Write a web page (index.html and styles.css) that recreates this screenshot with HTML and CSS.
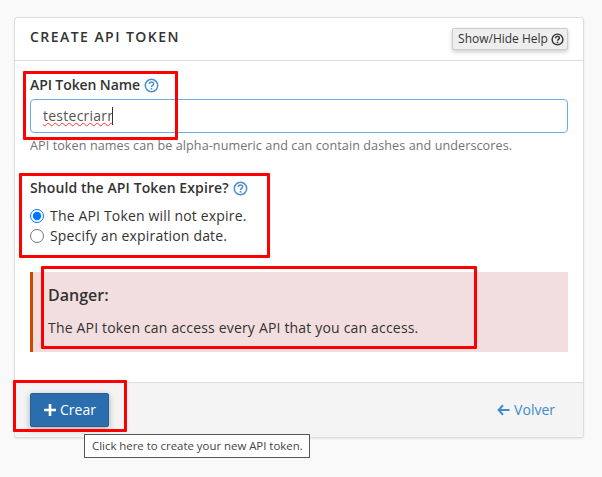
FILE: index.html
```html
<!DOCTYPE html>
<html lang="en">
<head>
<meta charset="utf-8">
<title>Create API Token</title>
<link rel="stylesheet" href="styles.css">
</head>
<body>
<div class="panel">
  <div class="panel-head">
    <h1 class="title">CREATE API TOKEN</h1>
    <button class="help-btn" type="button">Show/Hide Help
      <svg class="help-icon" width="13" height="13" viewBox="0 0 13 13"><circle cx="6.5" cy="6.5" r="5.4" fill="none" stroke="#333" stroke-width="1.4"/><path d="M4.6 5.2c0-2.4 3.8-2.4 3.8-.2 0 1.3-1.9 1.4-1.9 2.8" fill="none" stroke="#333" stroke-width="1.5"/><rect x="5.7" y="8.7" width="1.6" height="1.6" fill="#333"/></svg>
    </button>
  </div>
  <div class="panel-body">
    <div class="field">
      <div class="label">API Token Name
        <svg class="q-icon" width="15" height="15" viewBox="0 0 15 15"><circle cx="7.5" cy="7.5" r="6.2" fill="none" stroke="#4a90cf" stroke-width="1.5"/><path d="M5.4 6c0-2.7 4.3-2.7 4.3-.2 0 1.5-2.2 1.5-2.2 3.2" fill="none" stroke="#4a90cf" stroke-width="1.5"/><rect x="6.7" y="10" width="1.6" height="1.6" fill="#4a90cf"/></svg>
      </div>
      <div class="input"><span class="misspelled">testecriarr</span><span class="caret"></span></div>
      <div class="hint">API token names can be alpha-numeric and can contain dashes and underscores.</div>
    </div>
    <div class="field-expire">
      <div class="label label-wide">Should the API Token Expire?
        <svg class="q-icon" width="15" height="15" viewBox="0 0 15 15"><circle cx="7.5" cy="7.5" r="6.2" fill="none" stroke="#4a90cf" stroke-width="1.5"/><path d="M5.4 6c0-2.7 4.3-2.7 4.3-.2 0 1.5-2.2 1.5-2.2 3.2" fill="none" stroke="#4a90cf" stroke-width="1.5"/><rect x="6.7" y="10" width="1.6" height="1.6" fill="#4a90cf"/></svg>
      </div>
      <label class="radio"><input type="radio" name="exp" checked> The API Token will not expire.</label>
      <label class="radio"><input type="radio" name="exp"> Specify an expiration date.</label>
    </div>
    <div class="danger">
      <div class="danger-title">Danger:</div>
      <div class="danger-text">The API token can access every API that you can access.</div>
    </div>
  </div>
  <div class="panel-foot">
    <button class="create" type="button"><svg width="12" height="12" viewBox="0 0 12 12"><path d="M6 0v12M0 6h12" stroke="#fff" stroke-width="2.6"/></svg> Crear</button>
    <a class="back" href="#"><svg width="13" height="12" viewBox="0 0 13 12"><path d="M6 1.2 1.6 6 6 10.8M2 6h10.5" fill="none" stroke="#428bca" stroke-width="2"/></svg> Volver</a>
  </div>
</div>
<div class="mark mark-name"></div>
<div class="mark mark-expire"></div>
<div class="mark mark-danger"></div>
<div class="mark mark-create"></div>
<div class="tooltip">Click here to create your new API token.</div>
</body>
</html>
```

FILE: styles.css
```css
* { box-sizing: border-box; }
html, body { height: 100%; }
body {
  margin: 0;
  padding: 17px 18px 0 14px;
  background: #f9f9f9;
  color: #333;
  font-family: "Open Sans", sans-serif;
  font-size: 14px;
  line-height: 20px;
  overflow: hidden;
}
.panel {
  width: 570px;
  background: #fff;
  border: 1px solid #ddd;
  border-radius: 3px;
  box-shadow: 0 1px 2px rgba(0,0,0,.08);
}
.panel-head {
  height: 43px;
  border-bottom: 1px solid #ddd;
  display: flex;
  justify-content: space-between;
  padding: 10px 15px 0;
}
.title {
  margin: 0;
  font-size: 14px;
  font-weight: 600;
  letter-spacing: 1.45px;
  line-height: 18px;
  color: #333;
}
.help-btn {
  height: 22px;
  width: 116px;
  padding: 0 0 0 2px;
  font: 12px/20px "Open Sans", sans-serif;
  color: #333;
  background: #eee;
  border: 1px solid #ccc;
  border-radius: 2px;
  box-shadow: 0 2px 4px rgba(0,0,0,.2);
  display: flex;
  align-items: center;
  justify-content: center;
  gap: 3px;
}
.panel-body { padding: 14px 15px 31px; height: 321px; }
.label { font-weight: 600; display: flex; align-items: center; gap: 4px; height: 20px; letter-spacing: -.1px; }
.label-wide { letter-spacing: .1px; }
.q-icon { flex: none; }
.input {
  margin-top: 4px;
  height: 34px;
  border: 1px solid #66afe9;
  border-radius: 4px;
  padding: 6px 12px;
  color: #555;
  display: flex;
  align-items: center;
  letter-spacing: .25px;
}
.misspelled { text-decoration: underline wavy #f33 1px; text-underline-offset: 1px; }
.caret { width: 1px; height: 18px; background: #333; margin-left: -1px; }
.hint { margin-top: 3px; font-size: 12.6px; color: #737373; letter-spacing: .08px; }
.field-expire { margin-top: 22px; }
.field-expire .label { margin-bottom: 8px; }
.radio { display: flex; align-items: center; gap: 6px; height: 20px; letter-spacing: .17px; }
.radio input { margin: 0; width: 14px; height: 14px; accent-color: #0075ff; }
.danger {
  margin-top: 26px;
  height: 80px;
  padding: 9px 15px 0;
  background: #f2dede;
  border-left: 3px solid #d14900;
}
.danger-title { font-size: 16px; font-weight: 600; line-height: 28px; color: #333; }
.danger-text { margin-top: 9px; letter-spacing: .18px; }
.panel-foot {
  height: 55px;
  background: #f4f4f4;
  border-top: 1px solid #ddd;
  padding: 10px 28px 0 15px;
  display: flex;
  justify-content: space-between;
  border-radius: 0 0 3px 3px;
}
.create {
  width: 79px;
  height: 34px;
  padding: 0 0 0 1px;
  background: #2a6ead;
  color: #fff;
  border: 1px solid #275f95;
  border-radius: 2px;
  font: 14px/20px "Open Sans", sans-serif;
  box-shadow: 0 2px 6px rgba(0,0,0,.3);
  display: flex;
  align-items: center;
  justify-content: center;
  gap: 4px;
}
.back {
  color: #428bca;
  text-decoration: none;
  display: flex;
  align-items: center;
  gap: 4px;
  height: 34px;
}
.mark { position: absolute; border: 3px solid #f00; border-radius: 1px; }
.mark-name { left: 23px; top: 71px; width: 155px; height: 69px; }
.mark-expire { left: 19px; top: 173px; width: 251px; height: 85px; }
.mark-danger { left: 41px; top: 266px; width: 436px; height: 83px; }
.mark-create { left: 13px; top: 380px; width: 114px; height: 52px; }
.tooltip {
  position: absolute;
  left: 84px;
  top: 434px;
  width: 226px;
  height: 24px;
  background: #fff;
  border: 1px solid #555;
  font-size: 11.4px;
  line-height: 22px;
  padding-left: 7px;
  white-space: nowrap;
  color: #444;
}
```
